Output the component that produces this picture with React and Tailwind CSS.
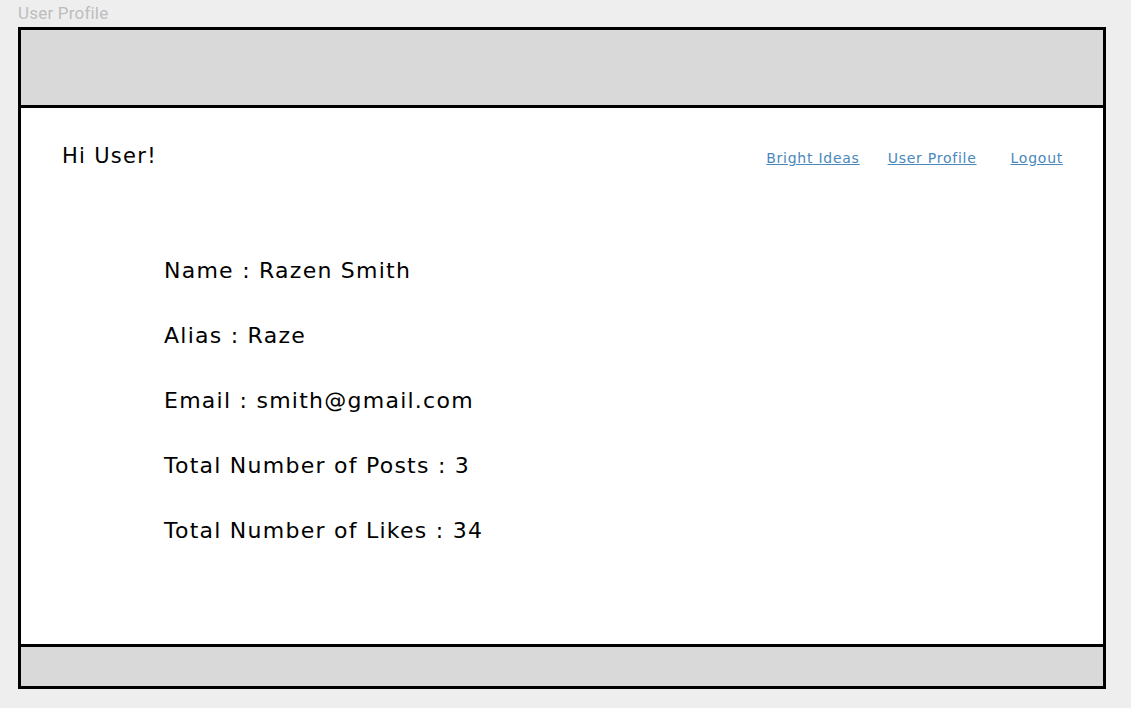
export default function App() {
  const rows = [
    'Name : Razen Smith',
    'Alias : Raze',
    'Email : smith@gmail.com',
    'Total Number of Posts : 3',
    'Total Number of Likes : 34',
  ]

  return (
    <div className="min-h-[708px] w-full bg-[#eeeeee] pl-[18px] pt-[3px] font-['DejaVu_Sans',sans-serif]">
      <div className="h-[24px] font-['Roboto',sans-serif] text-[17px] leading-[20px] tracking-[0.2px] text-[#bdbdbd]">User Profile</div>

      <div className="flex h-[662px] w-[1088px] flex-col border-[3px] border-black bg-white">
        <div className="h-[78px] shrink-0 border-b-[3px] border-black bg-[#d9d9d9]" />

        <div className="flex flex-1 flex-col">
          <div className="flex items-center justify-between pl-[41px] pr-[40px] pt-[33px]">
            <div className="text-[21px] tracking-[1.3px] text-black">Hi User!</div>
            <nav className="flex items-center gap-[28px] pt-[3px] text-[14px] tracking-[0.75px] text-[#4a87bb]">
              <a href="#" className="underline">Bright Ideas</a>
              <a href="#" className="underline">User Profile</a>
              <a href="#" className="ml-[6px] underline">Logout</a>
            </nav>
          </div>

          <div className="flex flex-col gap-[36px] pl-[143px] pt-[83px] text-[22px] leading-[29px] tracking-[1.25px] text-black">
            {rows.map((r) => (
              <div key={r}>{r}</div>
            ))}
          </div>
        </div>

        <div className="h-[42px] shrink-0 border-t-[3px] border-black bg-[#d9d9d9]" />
      </div>
    </div>
  )
}
